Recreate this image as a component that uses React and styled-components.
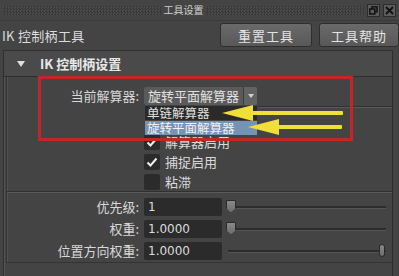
import React from "react";
import styled, { createGlobalStyle } from "styled-components";

const Global = createGlobalStyle`
  html, body { margin: 0; padding: 0; background: #444444; }
  body {
    width: 399px; height: 276px; overflow: hidden;
    font-family: "Noto Sans CJK SC", "Noto Sans", sans-serif;
    color: #d8d8d8;
  }
`;

const Page = styled.div`
  position: relative;
  width: 399px;
  height: 276px;
  overflow: hidden;
  background: #444444;
`;

const TitleBar = styled.div`
  height: 21px;
  display: flex;
  align-items: center;
  padding: 0 3px;
  box-sizing: border-box;
  border-bottom: 1px solid #3a3a3a;
`;

const Dots = styled.div`
  flex: 1;
  height: 9px;
  background: repeating-conic-gradient(#393939 0 25%, #4c4c4c 0 50%) 0 0 / 3px 3px;
`;

const TitleText = styled.div`
  width: 45px;
  text-align: center;
  font-size: 10px;
  line-height: 12px;
  color: #d0d0d0;
`;

const WinButtons = styled.div`
  display: flex;
  gap: 3px;
  margin-left: 3px;
`;

const WinButton = styled.div`
  width: 13px;
  height: 13px;
  box-sizing: border-box;
  background: #5c5c5c;
  border: 1px solid #2c2c2c;
  display: flex;
  align-items: center;
  justify-content: center;
`;

const ToolRow = styled.div`
  height: 28px;
  display: flex;
  align-items: center;
  padding-left: 2px;
`;

const ToolName = styled.div`
  flex: 1;
  font-size: 13px;
  color: #dddddd;
  letter-spacing: 0.3px;
`;

const ToolButton = styled.div`
  width: ${(p) => p.$w}px;
  height: 24px;
  margin-left: ${(p) => p.$gap}px;
  box-sizing: border-box;
  border: 1px solid #2e2e2e;
  border-radius: 3px;
  background: linear-gradient(#6a6a6a, #585858);
  font-size: 13px;
  color: #e4e4e4;
  display: flex;
  align-items: center;
  justify-content: center;
  letter-spacing: 1px;
`;

const Frame = styled.div`
  margin: 1px 6px 0 3px;
  border: 1px solid #2f2f2f;
  border-bottom: none;
  box-shadow: inset 1px 1px 0 #555;
  height: 240px;
`;

const SectionHeader = styled.div`
  height: 25px;
  display: flex;
  align-items: center;
  background: #4a4a4a;
  border-bottom: 1px solid #2e2e2e;
  padding-left: 13px;
  font-size: 13px;
  font-weight: bold;
  color: #e8e8e8;
`;

const Triangle = styled.span`
  width: 0;
  height: 0;
  border-left: 4px solid transparent;
  border-right: 4px solid transparent;
  border-top: 6px solid #e0e0e0;
  margin-right: 15px;
`;

const Body = styled.div`
  margin-left: 2px;
  border-left: 1px solid #333;
  box-shadow: inset 1px 0 0 #525252;
  border-bottom: 1px solid #333;
  padding: 9px 0 3px 0;
`;

const Row = styled.div`
  display: grid;
  grid-template-columns: 132px 1fr;
  column-gap: 5px;
  align-items: center;
  height: ${(p) => p.$h || 18}px;
`;

const Label = styled.div`
  text-align: right;
  font-size: 13px;
  color: #d8d8d8;
`;

const Combo = styled.div`
  width: 113px;
  height: 18px;
  display: flex;
  border-radius: 2px;
  background: #5a5a5a;
  overflow: hidden;
`;

const ComboText = styled.div`
  flex: 1;
  font-size: 13px;
  line-height: 18px;
  padding-left: 4px;
  color: #e0e0e0;
`;

const ComboArrow = styled.div`
  width: 13px;
  border-left: 1px solid #3a3a3a;
  background: #626262;
  display: flex;
  align-items: center;
  justify-content: center;
  &::after {
    content: "";
    border-left: 3px solid transparent;
    border-right: 3px solid transparent;
    border-top: 4px solid #d0d0d0;
  }
`;

const Divider = styled.div`
  height: 1px;
  background: ${(p) => p.$c || "#5a5a5a"};
  margin: ${(p) => p.$m || "0"};
  border-top: 1px solid #303030;
`;

const Checks = styled.div`
  display: flex;
  flex-direction: column;
  gap: 4px;
  margin-top: 24px;
`;

const CheckBox = styled.div`
  width: 16px;
  height: 16px;
  border-radius: 2px;
  background: #2b2b2b;
  display: flex;
  align-items: center;
  justify-content: center;
`;

const CheckLine = styled.div`
  display: flex;
  align-items: center;
  gap: 5px;
  font-size: 13px;
  color: #dadada;
`;

const Fields = styled.div`
  display: flex;
  flex-direction: column;
  gap: 4px;
  margin-top: 4px;
`;

const FieldBox = styled.div`
  display: flex;
  align-items: center;
`;

const Input = styled.div`
  width: 78px;
  height: 18px;
  box-sizing: border-box;
  border-radius: 2px;
  background: #2b2b2b;
  padding-left: 4px;
  font-family: "DejaVu Sans", sans-serif;
  font-size: 12px;
  line-height: 18px;
  color: #dcdcdc;
`;

const Slider = styled.div`
  position: relative;
  width: 160px;
  height: 14px;
  margin-left: 4px;
  &::before {
    content: "";
    position: absolute;
    left: 2px;
    right: 0;
    top: 6px;
    height: 2px;
    background: #2c2c2c;
    border-bottom: 1px solid #555;
  }
`;

const Thumb = styled.div`
  position: absolute;
  top: 0;
  ${(p) => (p.$end ? "right: 1px; width: 6px;" : "left: 0; width: 10px;")}
  height: 13px;
  background: linear-gradient(#8a8a8a, #6c6c6c);
  border: 1px solid #2a2a2a;
  box-sizing: border-box;
  clip-path: ${(p) =>
    p.$end ? "none" : "polygon(0 0, 100% 0, 100% 65%, 50% 100%, 0 65%)"};
  border-radius: ${(p) => (p.$end ? "3px" : "1px")};
`;

const DropList = styled.div`
  position: absolute;
  left: 145px;
  top: 106px;
  width: 112px;
  font-size: 12.5px;
  line-height: 14px;
`;

const DropItem = styled.div`
  height: 14px;
  padding-left: 2px;
  background: ${(p) => (p.$active ? "#7494b6" : "#2a2a2a")};
  color: ${(p) => (p.$active ? "#f2f2f2" : "#e0e0e0")};
  margin-top: ${(p) => (p.$active ? "1px" : "0")};
`;

const RedBox = styled.div`
  position: absolute;
  left: 38px;
  top: 76px;
  width: 315px;
  height: 65px;
  box-sizing: border-box;
  border: 3px solid #c0272b;
`;

const Arrows = styled.svg`
  position: absolute;
  left: 0;
  top: 0;
  pointer-events: none;
`;

const Restore = () => (
  <svg width="9" height="9" viewBox="0 0 9 9">
    <rect x="3" y="0.8" width="5" height="5" fill="none" stroke="#111" strokeWidth="1.5" />
    <rect x="0.8" y="3" width="5" height="5" fill="#5c5c5c" stroke="#111" strokeWidth="1.5" />
  </svg>
);

const Close = () => (
  <svg width="9" height="9" viewBox="0 0 9 9">
    <path d="M1 1 L8 8 M8 1 L1 8" stroke="#111" strokeWidth="1.8" />
  </svg>
);

const Tick = () => (
  <svg width="12" height="12" viewBox="0 0 12 12">
    <path d="M1.5 6.5 L4.5 9.5 L10.5 2.5" fill="none" stroke="#eeeeee" strokeWidth="2" />
  </svg>
);

const checks = [
  { label: "解算器启用", on: true },
  { label: "捕捉启用", on: true },
  { label: "粘滞", on: false },
];

const fields = [
  { label: "优先级:", value: "1", end: false },
  { label: "权重:", value: "1.0000", end: false },
  { label: "位置方向权重:", value: "1.0000", end: true },
];

export default function App() {
  return (
    <Page>
      <Global />
      <TitleBar>
        <Dots />
        <TitleText>工具设置</TitleText>
        <Dots />
        <WinButtons>
          <WinButton><Restore /></WinButton>
          <WinButton><Close /></WinButton>
        </WinButtons>
      </TitleBar>
      <ToolRow>
        <ToolName>IK 控制柄工具</ToolName>
        <ToolButton $w={92} $gap={0}>重置工具</ToolButton>
        <ToolButton $w={80} $gap={7}>工具帮助</ToolButton>
      </ToolRow>
      <Frame>
        <SectionHeader>
          <Triangle />
          IK 控制柄设置
        </SectionHeader>
        <Body>
          <Row>
            <Label>当前解算器:</Label>
            <Combo>
              <ComboText>旋转平面解算器</ComboText>
              <ComboArrow />
            </Combo>
          </Row>
          <Divider $m="2px 0 0 252px" />
          <Checks>
            {checks.map((c) => (
              <Row key={c.label} $h={16}>
                <span />
                <CheckLine>
                  <CheckBox>{c.on && <Tick />}</CheckBox>
                  {c.label}
                </CheckLine>
              </Row>
            ))}
          </Checks>
          <Divider $m="3px 0 0 0" />
          <Fields>
            {fields.map((f) => (
              <Row key={f.label}>
                <Label>{f.label}</Label>
                <FieldBox>
                  <Input>{f.value}</Input>
                  <Slider>
                    <Thumb $end={f.end} />
                  </Slider>
                </FieldBox>
              </Row>
            ))}
          </Fields>
        </Body>
      </Frame>
      <DropList>
        <DropItem>单链解算器</DropItem>
        <DropItem $active>旋转平面解算器</DropItem>
      </DropList>
      <RedBox />
      <Arrows width="399" height="276" viewBox="0 0 399 276">
        <g fill="#f0df38" stroke="none">
          <rect x="248" y="111" width="95" height="4" rx="1" />
          <polygon points="222,113 253,105 253,121" />
          <rect x="274" y="125" width="68" height="4" rx="1" />
          <polygon points="248,127 279,119 279,135" />
        </g>
      </Arrows>
    </Page>
  );
}
